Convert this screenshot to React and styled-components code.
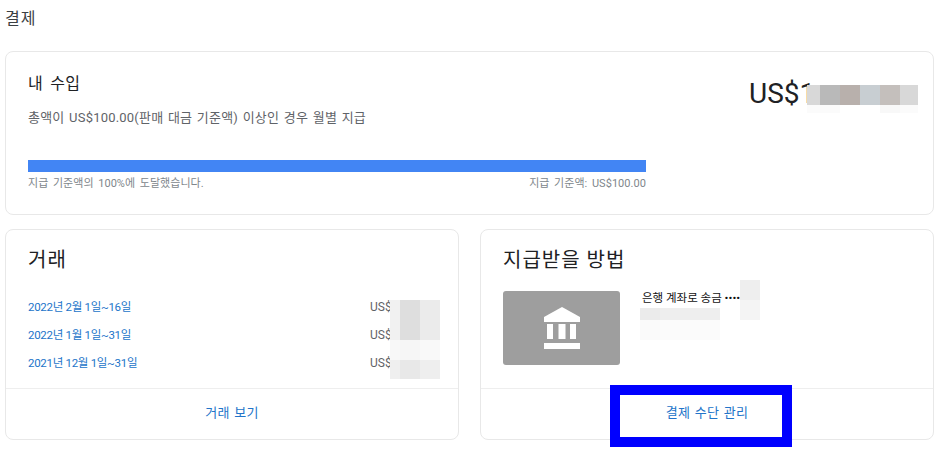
import React from 'react';
import styled, { createGlobalStyle } from 'styled-components';

const GlobalStyle = createGlobalStyle`
  html, body { margin: 0; padding: 0; background: #fff; }
  body {
    font-family: Roboto, "Noto Sans CJK KR", "Liberation Sans", sans-serif;
    color: #202124;
    overflow: hidden;
  }
`

const Page = styled.div`
  position: relative;
  width: 947px;
  height: 456px;
  box-sizing: border-box;
  padding: 8px 13px 0 5px;
`
const PageTitle = styled.h1`
  margin: 0 0 22px;
  height: 21px;
  font-size: 16px;
  line-height: 21px;
  font-weight: 400;
  letter-spacing: 1px;
  color: #3c4043;
`
const Card = styled.section`
  display: flex;
  flex-direction: column;
  box-sizing: border-box;
  background: #fff;
  border: 1px solid #e8e8e8;
  border-radius: 8px;
  height: ${props => props.$height}px;
`
const Earnings = styled.div`
  display: flex;
  justify-content: space-between;
  padding: 21px 15px 0 22px;
`
const EarningsMain = styled.div`
  width: 618px;
`
const CardTitle = styled.h2`
  margin: 0;
  font-size: 16px;
  line-height: 22px;
  font-weight: 400;
  letter-spacing: .3px;
  word-spacing: 3px;
  color: #202124;
`
const Description = styled.p`
  margin: 14px 0 0;
  font-size: 13px;
  line-height: 18px;
  letter-spacing: .2px;
  word-spacing: 1.2px;
  color: #5f6368;
`
const Bar = styled.div`
  height: 12px;
  margin-top: 33px;
  background: #4285f4;
`
const BarLabels = styled.div`
  display: flex;
  justify-content: space-between;
  margin-top: 4px;
  font-size: 11px;
  line-height: 15px;
  letter-spacing: .05px;
  word-spacing: 1.8px;
  color: #80868b;
`
const Amount = styled.div`
  position: relative;
  width: 169px;
  margin-top: 5px;
  font-size: 28px;
  line-height: 32px;
  color: #202124;
`
const Columns = styled.div`
  display: grid;
  grid-template-columns: 454px 454px;
  gap: 21px;
  margin-top: 14px;
`
const PanelBody = styled.div`
  flex: 1;
  padding: 16px 18px 0 22px;
`
const PanelTitle = styled.h2`
  margin: 0;
  font-size: 20px;
  line-height: 28px;
  font-weight: 400;
  letter-spacing: 1px;
  color: #202124;
`
const Rows = styled.div`
  position: relative;
  margin-top: 19px;
`
const Row = styled.div`
  display: flex;
  justify-content: space-between;
  height: 28px;
  font-size: 12px;
  line-height: 28px;
`
const PeriodLink = styled.a`
  color: #2274c9;
  font-size: 11.5px;
  letter-spacing: -.3px;
  text-decoration: none;
`
const Currency = styled.span`
  width: 70px;
  color: #5f6368;
`
const CardFooter = styled.div`
  height: 50px;
  border-top: 1px solid #eeeeee;
  text-align: center;
  font-size: 13px;
  line-height: 48px;
  letter-spacing: .3px;
  word-spacing: 1px;
  color: #2274c9;
`
const Method = styled.div`
  display: flex;
  gap: 20px;
  margin-top: 17px;
`
const BankTile = styled.div`
  display: flex;
  align-items: center;
  justify-content: center;
  width: 117px;
  height: 74px;
  background: #9e9e9e;
  border-radius: 3px;
`
const BankText = styled.div`
  position: relative;
  font-size: 11.5px;
  line-height: 14px;
  color: #111;
`
const BankName = styled.div`
  padding-left: 2px;
  margin-bottom: 3px;
`
const Mosaic = styled.div`
  display: grid;
  flex: none;
  grid-template-columns: ${props => props.$cols};
  grid-template-rows: ${props => props.$rows};
`
const OverMosaic = styled(Mosaic)`
  position: absolute;
  top: ${props => props.$top}px;
  left: ${props => props.$left}px;
`
const Cell = styled.div`
  background: ${props => props.$color};
`
const Highlight = styled.div`
  position: absolute;
  left: 610px;
  top: 385px;
  width: 182px;
  height: 62px;
  box-sizing: border-box;
  border: 10px solid #0000ff;
`

const cells = (colors) => colors.map((c, i) => <Cell key={i} $color={c} />);

const BankIcon = () => (
  <svg width="38" height="42" viewBox="0 0 38 42" fill="#fff">
    <path d="M19 0 L37 10 V15 H1 V10 Z" />
    <rect x="4" y="17" width="6" height="15" />
    <rect x="15.5" y="17" width="7" height="15" />
    <rect x="27" y="17" width="6" height="15" />
    <rect x="1" y="36" width="36" height="6" />
  </svg>
);

const periods = ['2022년 2월 1일~16일', '2022년 1월 1일~31일', '2021년 12월 1일~31일'];

const App = () => {
  return (
    <Page>
      <GlobalStyle />
      <PageTitle>결제</PageTitle>
      <Card $height={164}>
        <Earnings>
          <EarningsMain>
            <CardTitle>내 수입</CardTitle>
            <Description>총액이 US$100.00(판매 대금 기준액) 이상인 경우 월별 지급</Description>
            <Bar />
            <BarLabels>
              <span>지급 기준액의 100%에 도달했습니다.</span>
              <span>지급 기준액: US$100.00</span>
            </BarLabels>
          </EarningsMain>
          <Amount>
            US$1
            <OverMosaic $top={7} $left={58} $cols="13px 20px 20px 20px 20px 18px" $rows="20px 8px">
              {cells(['#d8d8d8', '#b9b9b9', '#b8b0ac', '#c8ced2', '#c4bfbc', '#d8d8d8',
                '#fbfbfb', '#fbfbfb', '#ffffff', '#ffffff', '#f8f8f8', '#fbfbfb'])}
            </OverMosaic>
          </Amount>
        </Earnings>
      </Card>
      <Columns>
        <Card $height={211}>
          <PanelBody>
            <PanelTitle>거래</PanelTitle>
            <Rows>
              {periods.map(p => (
                <Row key={p}>
                  <PeriodLink href="#">{p}</PeriodLink>
                  <Currency>US$</Currency>
                </Row>
              ))}
              <OverMosaic $top={7} $left={362} $cols="10px 20px 20px" $rows="40px 20px 19px">
                {cells(['#f1f1f1', '#dedede', '#ebebeb',
                  '#f8f8f8', '#f6f6f6', '#f9f9f9',
                  '#efefef', '#e8e8e8', '#eeeeee'])}
              </OverMosaic>
            </Rows>
          </PanelBody>
          <CardFooter>거래 보기</CardFooter>
        </Card>
        <Card $height={211}>
          <PanelBody>
            <PanelTitle>지급받을 방법</PanelTitle>
            <Method>
              <BankTile><BankIcon /></BankTile>
              <BankText>
                <BankName>은행 계좌로 송금 ••••</BankName>
                <OverMosaic $top={-11} $left={100} $cols="20px" $rows="20px 20px">
                  {cells(['#eeeeee', '#f4f4f4'])}
                </OverMosaic>
                <Mosaic $cols="20px 60px" $rows="12px 20px">
                  {cells(['#ebebeb', '#eeeeee', '#fafafa', '#fbfbfb'])}
                </Mosaic>
              </BankText>
            </Method>
          </PanelBody>
          <CardFooter>결제 수단 관리</CardFooter>
        </Card>
      </Columns>
      <Highlight />
    </Page>
  );
}

export default App
